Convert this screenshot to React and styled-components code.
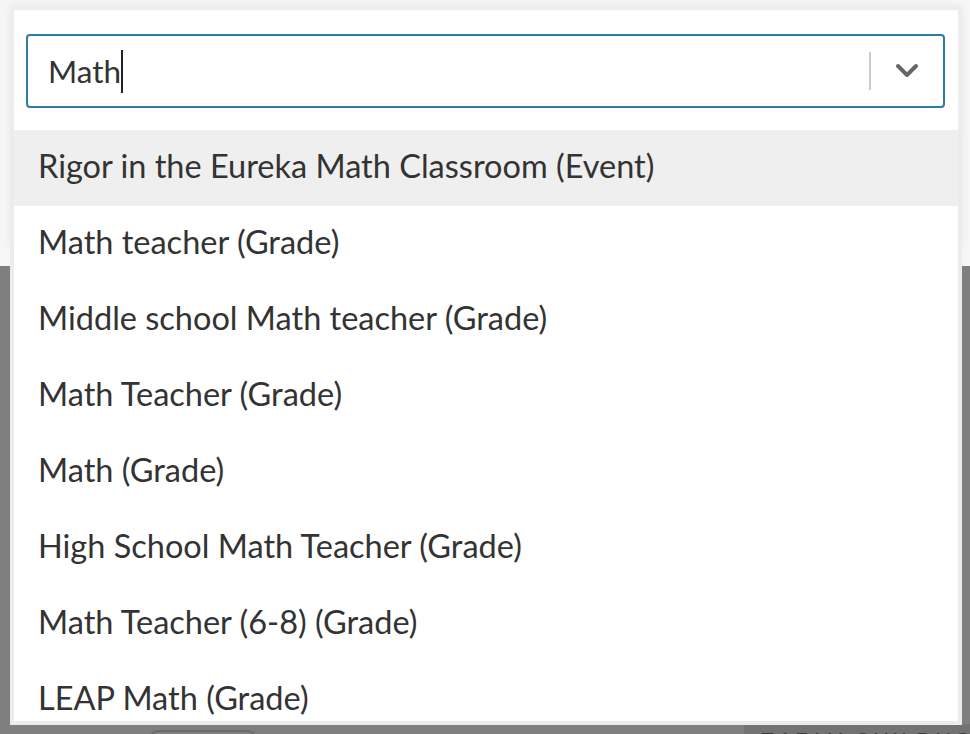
import React from "react";
import styled, { createGlobalStyle } from "styled-components";

const GlobalStyle = createGlobalStyle`
  html, body {
    margin: 0;
    padding: 0;
    background: #7f7f7f;
    font-family: "Lato", "Open Sans", sans-serif;
    overflow: hidden;
  }
`;

const Page = styled.div`
  width: 970px;
  height: 734px;
  position: relative;
  overflow: hidden;
`;

const ModalTop = styled.div`
  height: 266px;
  background: #f6f6f6;
  padding-top: 6px;
  box-sizing: border-box;
`;

const Panel = styled.div`
  position: relative;
  margin-left: 10px;
  width: 952px;
  height: 240px;
  box-sizing: border-box;
  background: #fff;
  border: 4px solid #ededed;
  box-shadow: 0 0 8px rgba(0, 0, 0, 0.06);
  padding: 24px 13px 0 12px;
`;

const Control = styled.div`
  display: flex;
  align-items: center;
  height: 74px;
  box-sizing: border-box;
  border: 2px solid #2f7ca3;
  border-radius: 4px;
  background: #fff;
`;

const ValueArea = styled.div`
  flex: 1;
  display: flex;
  align-items: center;
  padding-left: 20px;
  font-size: 31.5px;
  color: #333;
`;

const Caret = styled.span`
  display: inline-block;
  width: 2px;
  height: 43px;
  margin-left: 0;
  background: #222;
`;

const Separator = styled.span`
  width: 2px;
  height: 38px;
  background: #cccccc;
`;

const Indicator = styled.div`
  width: 72px;
  display: flex;
  align-items: center;
  justify-content: center;
  color: #666;
`;

const Menu = styled.div`
  position: absolute;
  left: -4px;
  top: 120px;
  width: 952px;
  height: 595px;
  box-sizing: border-box;
  background: #fff;
  border: 4px solid #ececec;
  border-top: none;
  overflow: hidden;
  z-index: 2;
`;

const Option = styled.div`
  height: 76px;
  box-sizing: border-box;
  display: flex;
  align-items: center;
  padding: 0 0 6px 24px;
  font-size: 32.5px;
  color: #333;
  background: ${(p) => (p.focused ? "#efefef" : "#fff")};
  white-space: nowrap;
`;

const Behind = styled.div`
  display: flex;
  align-items: flex-start;
  padding: 464px 0 0 150px;
`;

const GhostButton = styled.div`
  width: 102px;
  height: 30px;
  border: 2px solid #6c6c6c;
  border-radius: 8px;
`;

const Label = styled.div`
  margin-left: 488px;
  margin-top: -6px;
  flex: 1;
  background: #737373;
  color: #3c3c3c;
  font-family: "Liberation Sans", Arial, sans-serif;
  font-size: 22px;
  letter-spacing: 3px;
  padding: 4px 0 0 16px;
  height: 40px;
  white-space: nowrap;
  overflow: hidden;
`;

const options = [
  "Rigor in the Eureka Math Classroom (Event)",
  "Math teacher (Grade)",
  "Middle school Math teacher (Grade)",
  "Math Teacher (Grade)",
  "Math (Grade)",
  "High School Math Teacher (Grade)",
  "Math Teacher (6-8) (Grade)",
  "LEAP Math (Grade)",
];

function ChevronDown() {
  return (
    <svg width="24" height="16" viewBox="0 0 24 16" fill="none">
      <path
        d="M3 3 L12 12 L21 3"
        stroke="currentColor"
        strokeWidth="4"
        strokeLinecap="round"
        strokeLinejoin="round"
      />
    </svg>
  );
}

export default function App() {
  return (
    <>
      <GlobalStyle />
      <Page>
        <ModalTop>
          <Panel>
            <Control>
              <ValueArea>
                Math
                <Caret />
              </ValueArea>
              <Separator />
              <Indicator>
                <ChevronDown />
              </Indicator>
            </Control>
            <Menu>
              {options.map((label, i) => (
                <Option key={label} focused={i === 0}>
                  {label}
                </Option>
              ))}
            </Menu>
          </Panel>
        </ModalTop>
        <Behind>
          <GhostButton />
          <Label>EARLY CHILDHOOD</Label>
        </Behind>
      </Page>
    </>
  );
}
